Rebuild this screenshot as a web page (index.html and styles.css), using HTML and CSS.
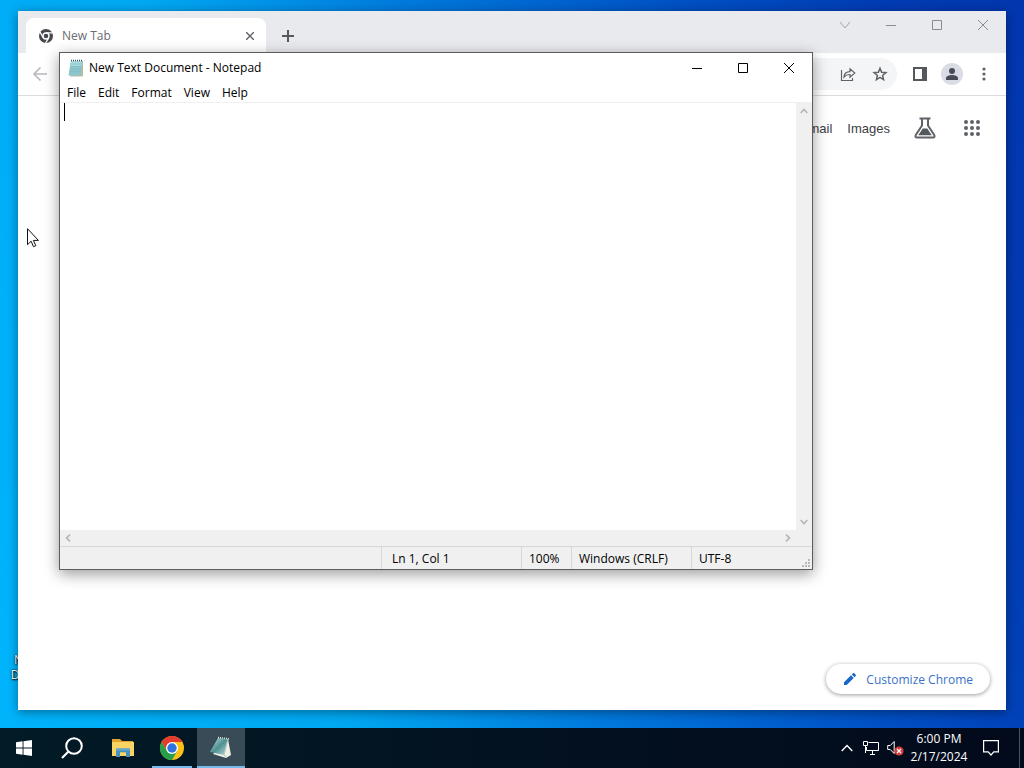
FILE: index.html
```html
<!DOCTYPE html>
<html lang="en">
<head>
    <meta charset="UTF-8">
    <title>Desktop</title>
    <link rel="stylesheet" href="styles.css">
</head>
<body>
<main class="desktop">
    <span class="desktop-label">New Text Document</span>

    <!-- browser window -->
    <section class="window browser">
        <header class="tab-strip">
            <div class="tab">
                <svg width="14" height="14" viewBox="0 0 14 14"><circle cx="7" cy="7" r="7" fill="#45494d"/><circle cx="7" cy="7" r="3" fill="#45494d" stroke="#fff" stroke-width="1.4"/><path d="M7 3.8h6.5M4.2 8.6L1 3M9.8 8.6L6.6 14" stroke="#fff" stroke-width="1.3"/></svg>
                <span class="tab-title">New Tab</span>
                <button class="tab-close" aria-label="Close tab"><svg width="8" height="8" viewBox="0 0 8 8"><path d="M0 0l8 8M8 0L0 8" stroke="#5f6368" stroke-width="1.4"/></svg></button>
            </div>
            <button class="new-tab" aria-label="New tab"><svg width="12" height="12" viewBox="0 0 12 12"><path d="M6 0v12M0 6h12" stroke="#55585c" stroke-width="2"/></svg></button>
            <div class="window-buttons">
                <button aria-label="Search tabs"><svg width="10" height="10" viewBox="0 0 10 10"><path d="M0 2l5 6 5-6" fill="none" stroke="#a3a5a8"/></svg></button>
                <button aria-label="Minimize"><svg width="10" height="10" viewBox="0 0 10 10"><path d="M0 5.5h10" stroke="#8a8c8f"/></svg></button>
                <button aria-label="Maximize"><svg width="10" height="10" viewBox="0 0 10 10"><path d="M.5.5h9v9h-9z" fill="none" stroke="#8a8c8f"/></svg></button>
                <button aria-label="Close"><svg width="10" height="10" viewBox="0 0 10 10"><path d="M0 0l10 10M10 0L0 10" stroke="#8a8c8f"/></svg></button>
            </div>
        </header>
        <div class="toolbar">
            <button class="tool" aria-label="Back"><svg width="14" height="14" viewBox="0 0 14 14"><path d="M14 7H1M7.5.5L1 7l6.500 6.500" fill="none" stroke="#b9bbbe" stroke-width="1.7"/></svg></button>
            <div class="omnibox">
                <input class="address" type="text" aria-label="Address">
                <button class="tool" aria-label="Share"><svg width="16" height="16" viewBox="0 0 16 16"><path d="M1.500 4v10.500h11V12M4 11c.3-3.500 2.500-5.200 6-5.300V2.800L14.800 7 10 11.200V8.500C7.300 8.400 5.500 9.300 4 11z" fill="none" stroke="#5f6368" stroke-width="1.2"/></svg></button>
                <button class="tool" aria-label="Bookmark"><svg width="16" height="16" viewBox="0 0 16 16"><path d="M8 2.200l1.600 4 4.300.4-3.300 2.800 1 4.200L8 11.400l-3.600 2.200 1-4.200-3.300-2.800 4.300-.4z" fill="none" stroke="#5f6368" stroke-width="1.500"/></svg></button>
            </div>
            <button class="tool" aria-label="Side panel"><svg width="14" height="14" viewBox="0 0 14 14"><path d="M1 1h12v12H1z" fill="none" stroke="#54585c" stroke-width="2"/><path d="M9 0h5v14H9z" fill="#54585c"/></svg></button>
            <button class="tool" aria-label="Profile"><svg width="22" height="22" viewBox="0 0 22 22"><circle cx="11" cy="11" r="11" fill="#dadce5"/><circle cx="11" cy="8" r="3" fill="#474b57"/><path d="M5 17v-1.800c0-2.200 3.500-3.200 6-3.200s6 1 6 3.200V17z" fill="#474b57"/></svg></button>
            <button class="tool" aria-label="Menu"><svg width="4" height="14" viewBox="0 0 4 14" fill="#5f6368"><circle cx="2" cy="2" r="1.600"/><circle cx="2" cy="7" r="1.600"/><circle cx="2" cy="12" r="1.600"/></svg></button>
        </div>
        <div class="page">
            <nav class="page-links">
                <a href="#">Gmail</a>
                <a href="#">Images</a>
                <button class="labs" aria-label="Search Labs"><svg width="22" height="22" viewBox="0 0 22 22"><path d="M5.500 1.500h11M8 2v6.500L1.800 18c-.8 1.300-.2 2.500 1.200 2.500h16c1.400 0 2-1.200 1.200-2.500L14 8.500V2" fill="none" stroke="#5f6368" stroke-width="2"/><path d="M8.800 11.500h4.400l4.600 6.800H4.200z" fill="#54585c"/></svg></button>
                <button class="apps" aria-label="Google apps"><svg width="16" height="16" viewBox="0 0 16 16" fill="#5f6368"><circle cx="2" cy="2" r="2"/><circle cx="8" cy="2" r="2"/><circle cx="14" cy="2" r="2"/><circle cx="2" cy="8" r="2"/><circle cx="8" cy="8" r="2"/><circle cx="14" cy="8" r="2"/><circle cx="2" cy="14" r="2"/><circle cx="8" cy="14" r="2"/><circle cx="14" cy="14" r="2"/></svg></button>
            </nav>
            <button class="customize">
                <svg width="14" height="14" viewBox="0 0 14 14" fill="#1967c8"><path d="M1 10.300V13h2.700l7-7L8 3.300zM8.800 2.500l2.700 2.700 1.200-1.200c.4-.4.4-.9 0-1.300l-1.400-1.400c-.4-.4-.9-.4-1.300 0z"/></svg>
                Customize Chrome
            </button>
        </div>
    </section>

    <!-- notepad window -->
    <section class="window notepad">
        <header class="title-bar">
            <svg width="16" height="18" viewBox="0 0 16 18"><path d="M4 2h11v15l-2 .5H2z" fill="#b9bda0"/><path d="M3 2h11l-1 14.500H.5z" fill="#8cc6cc"/><path d="M3 2h11l-.5 5H2z" fill="#a8dade"/><path d="M2.500 5h11M2 7.500h11.500M1.500 10h12M1 12.500h12" stroke="#7dbac2" stroke-width=".6"/><path d="M3 1.500h11.500" stroke="#2d5960" stroke-width="1.500" stroke-dasharray="1 1"/></svg>
            <h1 class="title">New Text Document - Notepad</h1>
            <div class="window-buttons">
                <button aria-label="Minimize"><svg width="10" height="10" viewBox="0 0 10 10"><path d="M0 5.500h10" stroke="#000"/></svg></button>
                <button aria-label="Maximize"><svg width="10" height="10" viewBox="0 0 10 10"><path d="M.5.5h9v9h-9z" fill="none" stroke="#000"/></svg></button>
                <button aria-label="Close"><svg width="10" height="10" viewBox="0 0 10 10"><path d="M0 0l10 10M10 0L0 10" stroke="#000"/></svg></button>
            </div>
        </header>
        <nav class="menu-bar">
            <button>File</button>
            <button>Edit</button>
            <button>Format</button>
            <button>View</button>
            <button>Help</button>
        </nav>
        <div class="editor">
            <textarea class="text" aria-label="Text"></textarea>
            <span class="caret"></span>
            <div class="scroll scroll-y">
                <button aria-label="Scroll up"><svg width="8" height="6" viewBox="0 0 8 6"><path d="M.7 5L4 1.500 7.300 5" fill="none" stroke="#b4b4b4" stroke-width="1.600"/></svg></button>
                <button aria-label="Scroll down"><svg width="8" height="6" viewBox="0 0 8 6"><path d="M.7 1L4 4.500 7.300 1" fill="none" stroke="#b4b4b4" stroke-width="1.600"/></svg></button>
            </div>
            <div class="scroll scroll-x">
                <button aria-label="Scroll left"><svg width="6" height="8" viewBox="0 0 6 8"><path d="M5 .7L1.500 4 5 7.300" fill="none" stroke="#b4b4b4" stroke-width="1.600"/></svg></button>
                <button aria-label="Scroll right"><svg width="6" height="8" viewBox="0 0 6 8"><path d="M1 .7L4.500 4 1 7.300" fill="none" stroke="#b4b4b4" stroke-width="1.600"/></svg></button>
            </div>
        </div>
        <footer class="status-bar">
            <span></span>
            <span class="position">Ln 1, Col 1</span>
            <span>100%</span>
            <span>Windows (CRLF)</span>
            <span>UTF-8</span>
            <svg class="grip" width="9" height="9" viewBox="0 0 9 9" fill="#b8b8b8"><path d="M6 0h2v2H6zM3 3h2v2H3zM6 3h2v2H6zM0 6h2v2H0zM3 6h2v2H3zM6 6h2v2H6z"/></svg>
        </footer>
    </section>

    <svg class="cursor" width="13" height="20" viewBox="0 0 13 20"><path d="M.5.7v16l3.600-3.500 2.400 5.500 2.300-1-2.400-5.300h5z" fill="#fff" stroke="#111"/></svg>
</main>

<footer class="taskbar">
    <button class="task" aria-label="Start"><svg width="16" height="16" viewBox="0 0 16 16" fill="#fff"><path d="M0 2.200L6.600 1.300v6.200H0zM7.500 1.200L16 0v7.500H7.500zM0 8.400h6.600v6.300L0 13.800zM7.500 8.400H16V16l-8.500-1.200z"/></svg></button>
    <button class="task" aria-label="Search"><svg width="22" height="22" viewBox="0 0 22 22"><circle cx="13" cy="9" r="7.800" fill="none" stroke="#fff" stroke-width="2"/><path d="M7.500 14.500L1 21" stroke="#fff" stroke-width="2.200"/></svg></button>
    <div class="task-list">
        <button class="task" aria-label="File Explorer"><svg width="22" height="18" viewBox="0 0 22 18"><path d="M0 0h8l2 2h11v4H0z" fill="#e2a32c"/><path d="M0 3h22v14H0z" fill="#f9d465"/><path d="M4 18V9.500h14V18h-4v-4.500H8V18z" fill="#4590bd"/><path d="M8 13.500h6V17H8z" fill="#f9d465"/><path d="M4 9.500h14v2H4z" fill="#67a9cf"/></svg></button>
        <button class="task running" aria-label="Google Chrome"><svg width="24" height="24" viewBox="0 0 24 24"><circle cx="12" cy="12" r="12" fill="#fbc116"/><path d="M1.600 6A12 12 0 0 1 22.400 6H12v6l-5.200 3z" fill="#e33b2e"/><path d="M1.600 6A12 12 0 0 0 12 24l5.200-9H6.800z" fill="#269f4b"/><circle cx="12" cy="12" r="6" fill="#fff"/><circle cx="12" cy="12" r="4.700" fill="#2f73e0"/></svg></button>
        <button class="task active" aria-label="Notepad"><svg width="24" height="24" viewBox="0 0 24 24"><defs><linearGradient id="pad" x1="0" y1="0" x2="1" y2="1"><stop offset="0" stop-color="#c8e6e4"/><stop offset=".5" stop-color="#4f9092"/><stop offset="1" stop-color="#b9dcda"/></linearGradient></defs><path d="M19 4l3 16-5 3L4 19z" fill="#eef0e6"/><path d="M9 3l10 1-4 16L1 17z" fill="url(#pad)"/><path d="M19 4l-4 16 2 2" fill="none" stroke="#b5c7c0"/><path d="M9 2.500l11 1.300" stroke="#dfe7e4" stroke-width="1.500" stroke-dasharray="1 1"/></svg></button>
    </div>
    <div class="tray">
        <button aria-label="Show hidden icons"><svg width="12" height="8" viewBox="0 0 12 8"><path d="M.7 7L6 1.500 11.300 7" fill="none" stroke="#fff" stroke-width="1.400"/></svg></button>
        <button aria-label="Network"><svg width="16" height="14" viewBox="0 0 16 14"><path d="M5.500 1.500h10v8h-12V6M7 13.500h5M9.500 10v3M.5.500h4v4h-4zM2.500 4.500V12" fill="none" stroke="#fff"/></svg></button>
        <button aria-label="Volume"><svg width="17" height="16" viewBox="0 0 17 16"><path d="M.7 5.500h2.500l4-4v12l-4-4H.7z" fill="none" stroke="#fff"/><circle cx="12" cy="11" r="4.600" fill="#d23c3c"/><path d="M10 9l4 4M14 9l-4 4" stroke="#fff" stroke-width="1.200"/></svg></button>
    </div>
    <time class="clock" datetime="2024-02-17T18:00"><span>6:00 PM</span><span>2/17/2024</span></time>
    <button class="notifications" aria-label="Notifications"><svg width="16" height="16" viewBox="0 0 16 16"><path d="M.6.6h14.800v11.300h-4.600L8 15l-2.800-3.100H.6z" fill="none" stroke="#fff" stroke-width="1.200"/></svg></button>
    <button class="show-desktop" aria-label="Show desktop"></button>
</footer>
</body>
</html>
```

FILE: styles.css
```css
* {
    box-sizing: border-box;
}

body {
    margin: 0;
    height: 100vh;
    display: flex;
    flex-direction: column;
    overflow: hidden;
    font-family: "Open Sans", "Noto Sans", sans-serif;
    font-size: 12px;
    color: #000000;
}

button {
    display: flex;
    align-items: center;
    justify-content: center;
    padding: 0;
    border: 0;
    background: none;
    font: inherit;
    color: inherit;
}

.desktop {
    flex: 1;
    position: relative;
    background: linear-gradient(75deg, #00b4fc 0%, #00a8f2 28%, #0078dc 50%, #0050c4 72%, #023cb4 88%, #0236ae 100%);
}

.desktop-label {
    position: absolute;
    left: 0;
    top: 652px;
    width: 80px;
    line-height: 15px;
    text-align: center;
    color: #ffffff;
    text-shadow: 1px 1px 2px #000000, 0 0 2px #000000;
}

.window {
    position: absolute;
    display: flex;
    flex-direction: column;
    background-color: #ffffff;
}

.window-buttons {
    display: flex;
    margin-left: auto;
}

.window-buttons button {
    width: 46px;
    height: 28px;
}

/* browser */
.browser {
    left: 18px;
    top: 11px;
    right: 18px;
    bottom: 18px;
    box-shadow: 0 2px 10px rgba(0, 0, 0, 0.4);
}

.tab-strip {
    display: flex;
    height: 42px;
    padding-left: 8px;
    background-color: #e8eaed;
}

.tab {
    display: flex;
    align-items: center;
    gap: 9px;
    width: 240px;
    margin-top: 7px;
    padding: 0 12px 0 13px;
    border-radius: 8px 8px 0 0;
    background-color: #ffffff;
    color: #6a6d71;
}

.tab-close {
    width: 8px;
    margin-left: auto;
}

.new-tab {
    width: 28px;
    height: 28px;
    margin: 11px 0 0 8px;
}

.toolbar {
    display: flex;
    align-items: center;
    height: 43px;
    padding: 0 6px;
    border-bottom: 1px solid #dadce0;
}

.tool {
    width: 32px;
    height: 32px;
}

.omnibox {
    flex: 1;
    display: flex;
    margin: 0 7px 0 70px;
    padding-right: 1px;
    border-radius: 16px;
    background-color: #f4f5f7;
}

.address {
    flex: 1;
    min-width: 0;
    border: 0;
    background: none;
}

.page {
    flex: 1;
    display: flex;
    flex-direction: column;
    align-items: flex-end;
    justify-content: space-between;
    padding: 16px;
}

.page-links {
    display: flex;
    align-items: center;
    gap: 15px;
    height: 32px;
    padding-right: 2px;
    font-family: "Liberation Sans", Arial, sans-serif;
    font-size: 13px;
}

.page-links a {
    color: #3c4043;
    text-decoration: none;
}

.labs,
.apps {
    width: 32px;
    height: 32px;
}

.labs {
    margin-left: 4px;
}

.customize {
    gap: 9px;
    height: 30px;
    padding: 0 17px;
    border-radius: 15px;
    box-shadow: 0 1px 4px rgba(0, 0, 0, 0.4);
    color: #3a72c8;
}

/* notepad */
.notepad {
    left: 59px;
    top: 52px;
    right: 211px;
    bottom: 158px;
    border: 1px solid #5c5c5c;
    box-shadow: 0 4px 14px rgba(0, 0, 0, 0.4);
}

.title-bar {
    display: flex;
    align-items: center;
    gap: 5px;
    height: 29px;
    padding-left: 8px;
}

.title {
    margin: 0;
    font-size: 12px;
    font-weight: normal;
}

.menu-bar {
    display: flex;
    height: 20px;
    padding-left: 1px;
}

.menu-bar button {
    padding: 0 6px;
}

.editor {
    flex: 1;
    position: relative;
    display: grid;
    grid-template-columns: 1fr 16px;
    grid-template-rows: 1fr 16px;
    border-top: 1px solid #f0f0f0;
    background-color: #f0f0f0;
}

.text {
    border: 0;
    padding: 0 4px;
    resize: none;
    outline: none;
    background-color: #ffffff;
}

.caret {
    position: absolute;
    left: 4px;
    top: 0;
    width: 1px;
    height: 18px;
    background-color: #000000;
}

.scroll {
    display: flex;
    justify-content: space-between;
}

.scroll-y {
    flex-direction: column;
}

.scroll button {
    width: 16px;
    height: 16px;
}

.status-bar {
    position: relative;
    display: grid;
    grid-template-columns: 1fr 140px 50px 120px 121px;
    height: 23px;
    border-top: 1px solid #d7d7d7;
    background-color: #f0f0f0;
    line-height: 24px;
}

.status-bar span {
    height: 22px;
}

.status-bar span + span {
    padding-left: 7px;
    border-left: 1px solid #d7d7d7;
}

.status-bar .position {
    padding-left: 10px;
}

.grip {
    position: absolute;
    right: 1px;
    bottom: 1px;
}

.cursor {
    position: absolute;
    left: 27px;
    top: 228px;
}

/* taskbar */
.taskbar {
    display: flex;
    height: 40px;
    background: linear-gradient(90deg, #021b26, #03101f 60%, #020a1c);
    color: #ffffff;
}

.task {
    width: 48px;
    height: 40px;
}

.task-list {
    display: flex;
    gap: 1px;
    margin-left: 3px;
}

.running {
    background: linear-gradient(#76b9ed, #76b9ed) center bottom / 40px 2px no-repeat;
}

.active {
    border-bottom: 2px solid #76b9ed;
    background-color: #384b56;
}

.tray {
    display: flex;
    margin-left: auto;
}

.tray button {
    width: 24px;
}

.clock {
    display: flex;
    flex-direction: column;
    align-items: center;
    justify-content: center;
    width: 64px;
    line-height: 18px;
}

.notifications {
    width: 40px;
}

.show-desktop {
    width: 5px;
    margin-left: 8px;
    border-left: 1px solid #4a5260;
}
```
